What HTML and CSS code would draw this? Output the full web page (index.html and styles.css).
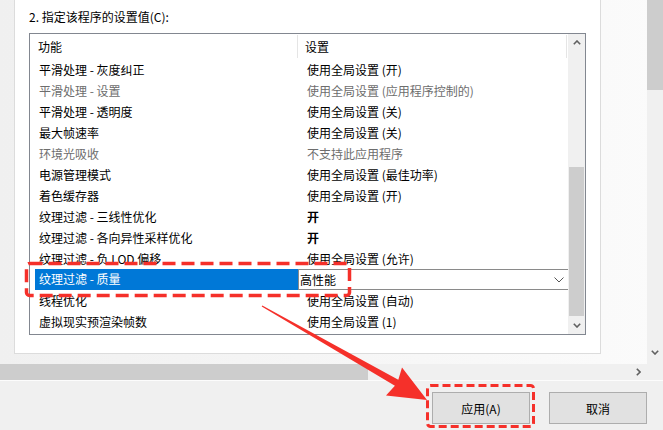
FILE: index.html
```html
<!DOCTYPE html>
<html>
<head>
  <meta charset="UTF-8">
  <title>管理 3D 设置</title>
  <link rel="stylesheet" href="styles.css">
</head>
<body>

  <div class="main">
    <div class="panel">
      <div class="caption">2. 指定该程序的设置值(C):</div>
      <div class="listbox">
        <div class="table">
          <div class="head">
            <div class="col-name">功能</div>
            <div class="col-value">设置</div>
          </div>
          <div class="row"><div class="col-name">平滑处理 - 灰度纠正</div><div class="col-value">使用全局设置 (开)</div></div>
          <div class="row dim"><div class="col-name">平滑处理 - 设置</div><div class="col-value">使用全局设置 (应用程序控制的)</div></div>
          <div class="row"><div class="col-name">平滑处理 - 透明度</div><div class="col-value">使用全局设置 (关)</div></div>
          <div class="row"><div class="col-name">最大帧速率</div><div class="col-value">使用全局设置 (关)</div></div>
          <div class="row dim"><div class="col-name">环境光吸收</div><div class="col-value">不支持此应用程序</div></div>
          <div class="row"><div class="col-name">电源管理模式</div><div class="col-value">使用全局设置 (最佳功率)</div></div>
          <div class="row"><div class="col-name">着色缓存器</div><div class="col-value">使用全局设置 (开)</div></div>
          <div class="row"><div class="col-name">纹理过滤 - 三线性优化</div><div class="col-value bold">开</div></div>
          <div class="row"><div class="col-name">纹理过滤 - 各向异性采样优化</div><div class="col-value bold">开</div></div>
          <div class="row"><div class="col-name">纹理过滤 - 负 LOD 偏移</div><div class="col-value">使用全局设置 (允许)</div></div>
          <div class="row selected">
            <div class="col-name">纹理过滤 - 质量</div>
            <div class="col-value combo">
              <span>高性能</span>
              <svg class="combo-arrow" width="10" height="6" viewBox="0 0 10 6"><polyline points="0.5,0.5 5,5 9.5,0.5" fill="none" stroke="#555" stroke-width="1"/></svg>
            </div>
          </div>
          <div class="row"><div class="col-name">线程优化</div><div class="col-value">使用全局设置 (自动)</div></div>
          <div class="row"><div class="col-name">虚拟现实预渲染帧数</div><div class="col-value">使用全局设置 (1)</div></div>
        </div>
        <div class="vscroll">
          <div class="arrow-box">
            <svg width="8" height="5" viewBox="0 0 8 5"><polyline points="0.8,4.2 4,1 7.2,4.2" fill="none" stroke="#606060" stroke-width="1.6"/></svg>
          </div>
          <div class="thumb"></div>
          <div class="arrow-box bottom">
            <svg width="8" height="5" viewBox="0 0 8 5"><polyline points="0.8,0.8 4,4 7.2,0.8" fill="none" stroke="#606060" stroke-width="1.6"/></svg>
          </div>
        </div>
      </div>
    </div>
    <div class="side"></div>
    <div class="outer-vscroll">
      <div class="outer-thumb"></div>
      <div class="arrow-box bottom">
        <svg width="8" height="5" viewBox="0 0 8 5"><polyline points="0.8,0.8 4,4 7.2,0.8" fill="none" stroke="#606060" stroke-width="1.6"/></svg>
      </div>
    </div>
  </div>

  <div class="hscroll">
    <div class="h-thumb"></div>
    <div class="h-arrow">
      <svg width="5" height="8" viewBox="0 0 5 8"><polyline points="0.8,0.8 4,4 0.8,7.2" fill="none" stroke="#606060" stroke-width="1.6"/></svg>
    </div>
  </div>

  <div class="actions">
    <button class="btn">应用(A)</button>
    <button class="btn">取消</button>
  </div>

  <!-- red annotation marks drawn over the dialog -->
  <svg class="marks" width="663" height="430" viewBox="0 0 663 430">
    <rect x="26.5" y="263.5" width="323" height="32" rx="3" fill="none" stroke="#f5302a" stroke-width="3.5" stroke-dasharray="13 6"/>
    <rect x="427.5" y="385.5" width="106" height="41" rx="3" fill="none" stroke="#f5302a" stroke-width="3" stroke-dasharray="8 4"/>
    <polygon points="262.3,305.6 398.3,379.7 402,367.5 427,400 386,395.5 394.9,385.7 261.7,306.4" fill="#f5302a"/>
  </svg>

</body>
</html>
```

FILE: styles.css
```css
body {
  margin: 0;
  width: 663px;
  height: 430px;
  overflow: hidden;
  position: relative;
  background-color: #f0f0f0;
  font-family: "Noto Sans CJK SC", "Microsoft YaHei", sans-serif;
  font-size: 12px;
  color: #000;
}
.main {
  display: flex;
  height: 364px;
  background: linear-gradient(to right, #f0f0f0, #fbfbfb);
}
.panel {
  margin-left: 14px;
  width: 587px;
  height: 354px;
  box-sizing: border-box;
  padding-left: 14px;
  background-color: #fff;
  border: 1px solid #dcdcdc;
  border-top: none;
}
.caption {
  height: 33px;
  line-height: 32px;
  padding-top: 1px;
  box-sizing: border-box;
}
.listbox {
  display: flex;
  width: 557px;
  height: 302px;
  box-sizing: border-box;
  border: 1px solid #828790;
}
.table {
  width: 538px;
}
.head {
  display: flex;
  height: 25px;
  align-items: center;
}
.head .col-name {
  width: 268px;
  box-sizing: border-box;
  padding-left: 8px;
  height: 23px;
  line-height: 23px;
  border-right: 1px solid #e5e5e5;
}
.head .col-value {
  flex: 1;
  padding-left: 7px;
  height: 23px;
  line-height: 23px;
  margin-right: 1px;
  border-right: 1px solid #e5e5e5;
}
.row {
  display: flex;
  height: 21px;
  line-height: 21px;
  white-space: nowrap;
}
.row .col-name {
  width: 268px;
  box-sizing: border-box;
  padding-left: 9px;
}
.row .col-value {
  flex: 1;
  padding-left: 9px;
}
.dim {
  color: #6d6d6d;
}
.bold {
  font-weight: bold;
}
.selected .col-name {
  margin-left: 5px;
  width: 263px;
  padding-left: 4px;
  height: 21px;
  line-height: 20px;
  background-color: #0078d7;
  color: #fff;
}
.selected .combo {
  display: flex;
  align-items: center;
  justify-content: space-between;
  height: 21px;
  box-sizing: border-box;
  padding-left: 1px;
  padding-right: 4px;
  border: 1px solid #8a8a8a;
  border-right: none;
  background-color: #fff;
}
.combo-arrow {
  display: block;
}
.vscroll {
  display: flex;
  flex-direction: column;
  width: 17px;
  background-color: #f0f0f0;
}
.arrow-box {
  height: 17px;
  display: flex;
  align-items: center;
  justify-content: center;
}
.arrow-box svg {
  display: block;
}
.thumb {
  margin: 116px 1px 0 1px;
  height: 149px;
  background-color: #cdcdcd;
}
.vscroll .bottom {
  margin-top: auto;
}
.side {
  flex: 1;
}
.outer-vscroll {
  display: flex;
  flex-direction: column;
  width: 16px;
  background-color: #f0f0f0;
}
.outer-thumb {
  height: 90px;
  background-color: #cdcdcd;
}
.outer-vscroll .bottom {
  margin-top: auto;
  margin-bottom: 3px;
}
.hscroll {
  display: flex;
  height: 16px;
  background-color: #f0f0f0;
  border-bottom: 1px solid #fcfcfc;
}
.h-thumb {
  width: 368px;
  background-color: #cdcdcd;
}
.h-arrow {
  margin-left: auto;
  margin-right: 22px;
  display: flex;
  align-items: center;
}
.h-arrow svg {
  display: block;
}
.actions {
  display: flex;
  justify-content: flex-end;
  gap: 19px;
  padding: 11px 16px 0 0;
}
.btn {
  width: 98px;
  height: 32px;
  padding: 0;
  font-family: inherit;
  font-size: 12px;
  color: #000;
  background-color: #e1e1e1;
  border: 1px solid #adadad;
}
.marks {
  position: absolute;
  left: 0;
  top: 0;
  pointer-events: none;
}
```
